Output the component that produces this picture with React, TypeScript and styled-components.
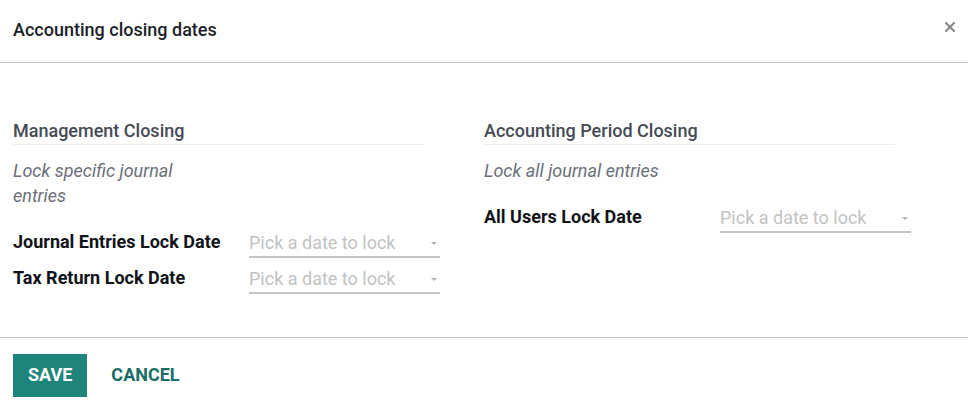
import React from "react";
import styled, { createGlobalStyle } from "styled-components";

const GlobalStyle = createGlobalStyle`
  body {
    margin: 0;
    background: #ffffff;
    font-family: Roboto, "Liberation Sans", Arial, sans-serif;
    font-size: 18px;
    color: #212529;
  }
`;

interface IField {
  label: string;
}

interface ISection {
  title: string;
  help: string;
  helpWidth?: number;
  fields: IField[];
}

const sections: ISection[] = [
  {
    title: "Management Closing",
    help: "Lock specific journal entries",
    helpWidth: 200,
    fields: [
      { label: "Journal Entries Lock Date" },
      { label: "Tax Return Lock Date" },
    ],
  },
  {
    title: "Accounting Period Closing",
    help: "Lock all journal entries",
    fields: [{ label: "All Users Lock Date" }],
  },
];

const App = (): JSX.Element => {
  return (
    <Dialog>
      <GlobalStyle />
      <Header>
        <Title>Accounting closing dates</Title>
        <CloseButton aria-label="Close">
          <svg width="10" height="10" viewBox="0 0 10 10">
            <path
              d="M1 1 L9 9 M9 1 L1 9"
              stroke="#8a8a8a"
              strokeWidth="2.2"
              strokeLinecap="square"
            />
          </svg>
        </CloseButton>
      </Header>
      <Body>
        {sections.map((section) => (
          <Column key={section.title}>
            <SectionTitle>{section.title}</SectionTitle>
            <Help width={section.helpWidth}>{section.help}</Help>
            {section.fields.map((field) => (
              <FieldRow key={field.label}>
                <Label>{field.label}</Label>
                <DateInput>
                  <Placeholder>Pick a date to lock</Placeholder>
                  <Caret />
                </DateInput>
              </FieldRow>
            ))}
          </Column>
        ))}
      </Body>
      <Footer>
        <PrimaryButton>Save</PrimaryButton>
        <LinkButton>Cancel</LinkButton>
      </Footer>
    </Dialog>
  );
};

const Dialog = styled.div`
  width: 968px;
  display: flex;
  flex-direction: column;
`;

const Header = styled.div`
  height: 62px;
  padding: 0 13px 0 13px;
  display: flex;
  align-items: center;
  justify-content: space-between;
  border-bottom: 1px solid #c6c9cd;
`;

const Title = styled.div`
  font-size: 18px;
  font-weight: 500;
  color: #1b1e27;
  line-height: 24px;
  margin-top: -2px;
`;

const CloseButton = styled.div`
  width: 10px;
  height: 10px;
  display: flex;
  margin-top: -8px;
`;

const Body = styled.div`
  display: flex;
  align-items: flex-start;
  padding: 56px 13px 41px 13px;
`;

const Column = styled.div`
  width: 472px;
  display: flex;
  flex-direction: column;
`;

const SectionTitle = styled.div`
  width: 411px;
  font-size: 18px;
  font-weight: 500;
  line-height: 24px;
  color: #454a55;
  padding-bottom: 1px;
  border-bottom: 1px solid #eceef0;
`;

const Help = styled.div<{ width?: number }>`
  width: ${(p) => (p.width ? `${p.width}px` : "auto")};
  margin-top: 13px;
  margin-bottom: 16px;
  font-style: italic;
  font-size: 18px;
  line-height: 25px;
  color: #6b707a;
`;

const FieldRow = styled.div`
  height: 36px;
  display: flex;
  align-items: center;
`;

const Label = styled.div`
  width: 236px;
  font-weight: 700;
  font-size: 18px;
  line-height: 24px;
  color: #111318;
`;

const DateInput = styled.div`
  width: 191px;
  height: 30px;
  box-sizing: content-box;
  display: flex;
  align-items: center;
  justify-content: space-between;
  border-bottom: 2px solid #c4c4c4;
`;

const Placeholder = styled.span`
  font-size: 18px;
  color: #c2c2c2;
  line-height: 24px;
  margin-top: 3px;
`;

const Caret = styled.span`
  width: 0;
  height: 0;
  margin-right: 3px;
  margin-top: 4px;
  border-left: 3px solid transparent;
  border-right: 3px solid transparent;
  border-top: 3px solid #b3b3b3;
`;

const Footer = styled.div`
  display: flex;
  align-items: center;
  padding: 16px 13px 21px 13px;
  border-top: 1px solid #c6c9cd;
`;

const PrimaryButton = styled.button`
  height: 43px;
  padding: 0 15px 2px 15px;
  border: none;
  border-radius: 0;
  background: #1f857a;
  color: #ffffff;
  font-family: Roboto, "Liberation Sans", Arial, sans-serif;
  font-size: 18px;
  font-weight: 700;
  text-transform: uppercase;
  cursor: pointer;
`;

const LinkButton = styled.button`
  height: 43px;
  margin-left: 9px;
  padding: 0 15px 2px 15px;
  border: none;
  background: transparent;
  color: #1a6d64;
  font-family: Roboto, "Liberation Sans", Arial, sans-serif;
  font-size: 18px;
  font-weight: 700;
  text-transform: uppercase;
  cursor: pointer;
`;

export default App;
